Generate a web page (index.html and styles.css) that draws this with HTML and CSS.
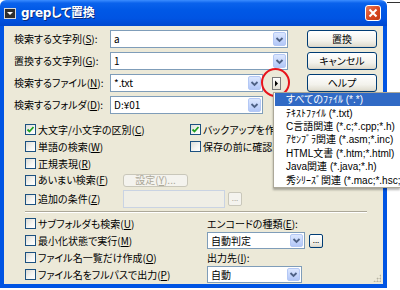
FILE: index.html
```html
<!doctype html>
<html>
<head>
<meta charset="UTF-8">
<title>grepして置換</title>
<link rel="stylesheet" href="styles.css">
</head>
<body>
<div class="desk-line"></div>
<div class="window">
	<div class="titlebar">
		<span class="sysicon"></span>
		<span class="title">grepして置換</span>
		<span class="close"><svg width="10" height="10" viewBox="0 0 10 10"><path d="M1.5 1.5 L8.5 8.5 M8.5 1.5 L1.5 8.5" stroke="#fff" stroke-width="2"/></svg></span>
	</div>
	<div class="frame">
		<div class="top">
			<div class="fields">
				<div class="field-row">
					<span class="lbl">検索する文字列(<u>S</u>):</span>
					<div class="combo wide"><span class="val">a</span><span class="drop"><svg width="9" height="7" viewBox="0 0 9 7"><path d="M1.5 2 L4.5 5 L7.5 2" fill="none" stroke="#4D6185" stroke-width="1.8"/></svg></span></div>
				</div>
				<div class="field-row">
					<span class="lbl">置換する文字列(<u>G</u>):</span>
					<div class="combo wide"><span class="val">1</span><span class="drop"><svg width="9" height="7" viewBox="0 0 9 7"><path d="M1.5 2 L4.5 5 L7.5 2" fill="none" stroke="#4D6185" stroke-width="1.8"/></svg></span></div>
				</div>
				<div class="field-row">
					<span class="lbl">検索するファイル(<u>N</u>):</span>
					<div class="combo narrow"><span class="val">*.txt</span><span class="drop"><svg width="9" height="7" viewBox="0 0 9 7"><path d="M1.5 2 L4.5 5 L7.5 2" fill="none" stroke="#4D6185" stroke-width="1.8"/></svg></span></div>
					<span class="pick"><svg width="5" height="7" viewBox="0 0 5 7"><path d="M1 0.5 L4 3.5 L1 6.5 Z" fill="#000"/></svg></span>
				</div>
				<div class="field-row">
					<span class="lbl">検索するフォルダ(<u>D</u>):</span>
					<div class="combo narrow"><span class="val">D:¥01</span><span class="drop"><svg width="9" height="7" viewBox="0 0 9 7"><path d="M1.5 2 L4.5 5 L7.5 2" fill="none" stroke="#4D6185" stroke-width="1.8"/></svg></span></div>
				</div>
			</div>
			<div class="buttons">
				<div class="btn">置換</div>
				<div class="btn">キャンセル</div>
				<div class="btn">ヘルプ</div>
			</div>
		</div>

		<div class="options">
			<div class="opt-row">
				<div class="col-left"><span class="box checked"><svg width="9" height="9" viewBox="0 0 9 9"><path d="M1.5 4.5 L3.5 6.5 L7.5 2" fill="none" stroke="#21A121" stroke-width="1.8"/></svg></span>大文字/小文字の区別(<u>C</u>)</div>
				<div class="col-right"><span class="box checked"><svg width="9" height="9" viewBox="0 0 9 9"><path d="M1.5 4.5 L3.5 6.5 L7.5 2" fill="none" stroke="#21A121" stroke-width="1.8"/></svg></span>バックアップを作成(<u>B</u>)</div>
			</div>
			<div class="opt-row">
				<div class="col-left"><span class="box"></span>単語の検索(<u>W</u>)</div>
				<div class="col-right"><span class="box"></span>保存の前に確認(<u>K</u>)</div>
			</div>
			<div class="opt-row">
				<div class="col-left"><span class="box"></span>正規表現(<u>R</u>)</div>
			</div>
			<div class="opt-row short">
				<div class="col-cond"><span class="box"></span>あいまい検索(<u>F</u>)</div>
				<div class="btn small disabled">設定(<u>Y</u>)...</div>
			</div>
			<div class="opt-row tall">
				<div class="col-cond"><span class="box"></span>追加の条件(<u>Z</u>)</div>
				<div class="edit disabled"></div>
				<div class="btn dots disabled">...</div>
			</div>
		</div>

		<div class="sep"></div>

		<div class="bottom">
			<div class="bottom-left">
				<div class="opt-row"><span class="box"></span>サブフォルダも検索(<u>U</u>)</div>
				<div class="opt-row"><span class="box"></span>最小化状態で実行(<u>M</u>)</div>
				<div class="opt-row"><span class="box"></span>ファイル名一覧だけ作成(<u>O</u>)</div>
				<div class="opt-row"><span class="box"></span>ファイル名をフルパスで出力(<u>P</u>)</div>
			</div>
			<div class="bottom-right">
				<div class="sub-lbl">エンコードの種類(<u>E</u>):</div>
				<div class="enc-row">
					<div class="combo enc"><span class="val">自動判定</span><span class="drop"><svg width="9" height="7" viewBox="0 0 9 7"><path d="M1.5 2 L4.5 5 L7.5 2" fill="none" stroke="#4D6185" stroke-width="1.8"/></svg></span></div>
					<div class="btn dots">...</div>
				</div>
				<div class="sub-lbl">出力先(<u>I</u>):</div>
				<div class="combo out"><span class="val">自動</span><span class="drop"><svg width="9" height="7" viewBox="0 0 9 7"><path d="M1.5 2 L4.5 5 L7.5 2" fill="none" stroke="#4D6185" stroke-width="1.8"/></svg></span></div>
			</div>
		</div>
		<div class="grip"></div>
	</div>
</div>

<div class="circle"></div>

<ul class="menu">
	<li class="sel">すべてのﾌｧｲﾙ (*.*)</li>
	<li>ﾃｷｽﾄﾌｧｲﾙ (*.txt)</li>
	<li>C言語関連 (*.c;*.cpp;*.h)</li>
	<li>ｱｾﾝﾌﾞﾗ関連 (*.asm;*.inc)</li>
	<li>HTML文書 (*.htm;*.html)</li>
	<li>Java関連 (*.java;*.h)</li>
	<li>秀ｼﾘｰｽﾞ関連 (*.mac;*.hsc;*.hsp)</li>
</ul>
</body>
</html>
```

FILE: styles.css
```css
* {
	box-sizing: border-box;
}

body {
	margin: 0;
	background: #fff;
	width: 400px;
	height: 290px;
	overflow: hidden;
	position: relative;
	font-family: "Noto Sans CJK JP", "Liberation Sans", sans-serif;
	font-size: 10px;
	font-feature-settings: "palt";
	color: #000;
	line-height: 1;
}

u {
	text-decoration: underline;
	text-underline-offset: 1px;
}

.desk-line {
	position: absolute;
	left: 387px;
	top: 2px;
	width: 13px;
	height: 1px;
	background: #333;
}

.window {
	width: 387px;
}

/* title bar */
.titlebar {
	height: 26px;
	display: flex;
	align-items: center;
	padding: 0 6px 0 4px;
	border-radius: 6px 6px 0 0;
	background: linear-gradient(#3C8DFF 0, #0A62EC 12%, #0058E6 40%, #0054E3 70%, #0048CF 100%);
}

.sysicon {
	width: 12px;
	height: 11px;
	margin-top: 1px;
	background: #2E2E2E;
	border: 1px solid #D8D8D8;
	position: relative;
}

.sysicon::after {
	content: "";
	position: absolute;
	left: 2px;
	top: 3px;
	border-left: 3px solid transparent;
	border-right: 3px solid transparent;
	border-top: 3px solid #fff;
}

.title {
	margin-left: 5px;
	color: #fff;
	font-weight: bold;
	font-size: 12px;
	font-family: "DejaVu Sans", "Noto Sans CJK JP", sans-serif;
	letter-spacing: -0.3px;
	text-shadow: 1px 1px 0 #0A2A7A;
}

.close {
	margin-left: auto;
	width: 16px;
	height: 16px;
	border: 1px solid #fff;
	border-radius: 3px;
	background: linear-gradient(135deg, #E97A5A, #D8461F 55%, #C23A14);
	display: flex;
	align-items: center;
	justify-content: center;
}

/* body of dialog */
.frame {
	position: relative;
	background: #ECE9D8;
	border: 4px solid #0054E3;
	border-top: 0;
	padding: 4px 0 1px 10px;
}

.top {
	display: flex;
}

.fields {
	width: 274px;
}

.field-row {
	display: flex;
	align-items: center;
	height: 18px;
	margin-bottom: 4px;
}

.field-row:last-child {
	margin-bottom: 0;
}

.lbl {
	width: 96px;
	white-space: nowrap;
}

.combo {
	height: 18px;
	background: #fff;
	border: 1px solid #7F9DB9;
	display: flex;
	align-items: center;
	padding: 1px;
}

.combo .val {
	flex: 1;
	padding-left: 2px;
}

.combo.wide {
	width: 178px;
}

.combo.narrow {
	width: 153px;
}

.drop {
	width: 13px;
	height: 14px;
	border-radius: 2px;
	border: 1px solid #B4C8F5;
	background: linear-gradient(#DCE7FE, #C3D4FB 60%, #B2C7F7);
	display: flex;
	align-items: center;
	justify-content: center;
}

.pick {
	width: 9px;
	height: 13px;
	margin-left: 9px;
	border: 1px solid #7A7A7A;
	background: linear-gradient(#fff, #E2DFD2);
	display: flex;
	align-items: center;
	justify-content: center;
}

.buttons {
	margin-left: 19px;
	width: 70px;
	display: flex;
	flex-direction: column;
	gap: 4px;
}

.btn {
	height: 18px;
	border: 1px solid #003C74;
	border-radius: 3px;
	background: linear-gradient(#FFFFFF, #F3F2EC 60%, #E3E0D4 90%, #D6D0C5);
	display: flex;
	align-items: center;
	justify-content: center;
	white-space: nowrap;
}

.btn.disabled {
	border-color: #C9C7BA;
	background: #F4F3EE;
	color: #ACA899;
}

.btn.small {
	width: 65px;
	height: 13px;
}

.btn.dots {
	width: 14px;
	height: 14px;
	border-radius: 2px;
	font-size: 8px;
	align-items: flex-end;
	padding-bottom: 3px;
}

/* check options */
.options {
	margin-top: 7px;
	padding-left: 11px;
}

.opt-row {
	display: flex;
	align-items: center;
	height: 17px;
	white-space: nowrap;
}

.opt-row.short {
	height: 16px;
}

.opt-row.tall {
	height: 18px;
	margin-top: 2px;
}

.col-left {
	width: 165px;
	display: flex;
	align-items: center;
}

.col-right {
	display: flex;
	align-items: center;
}

.col-cond {
	width: 98px;
	display: flex;
	align-items: center;
}

.box {
	width: 11px;
	height: 11px;
	margin-right: 2px;
	border: 1px solid #1C5180;
	background: linear-gradient(135deg, #DCDCD7, #F6F6F3 60%, #fff);
	display: flex;
	align-items: center;
	justify-content: center;
	flex: none;
}

.edit {
	width: 102px;
	height: 18px;
	border: 1px solid #C9D3E3;
	background: #EFEEE6;
	margin-right: 3px;
}

.sep {
	width: 342px;
	margin: 3px 0 0 11px;
	border-top: 1px solid #ACA899;
	border-bottom: 1px solid #fff;
}

/* lower part */
.bottom {
	display: flex;
	padding-left: 11px;
	margin-top: 2px;
}

.bottom-left {
	width: 182px;
}

.sub-lbl {
	height: 17px;
	display: flex;
	align-items: center;
}

.enc-row {
	display: flex;
	align-items: center;
	gap: 4px;
}

.combo.enc {
	width: 98px;
	height: 17px;
}

.combo.out {
	width: 95px;
	height: 17px;
}

.combo.enc .drop,
.combo.out .drop {
	height: 13px;
}

.grip {
	position: absolute;
	right: 2px;
	bottom: 2px;
	width: 8px;
	height: 8px;
	background: radial-gradient(circle, #B5B29F 0.8px, transparent 1.2px) 0 0 / 3px 3px;
	clip-path: polygon(100% 0, 100% 100%, 0 100%);
}

/* overlays */
.circle {
	position: absolute;
	left: 261px;
	top: 68px;
	width: 29px;
	height: 29px;
	border: 2.5px solid #E8141C;
	border-radius: 50%;
}

.menu {
	position: absolute;
	left: 273px;
	top: 92px;
	width: 127px;
	margin: 0;
	padding: 0 0 0 1px;
	list-style: none;
	background: #fff;
	border: 1px solid #ACA899;
	border-right: 0;
	overflow: hidden;
	box-shadow: 0 2px 2px rgba(0, 0, 0, 0.3);
	font-family: "Liberation Sans", "Noto Sans CJK JP", sans-serif;
}

.menu li {
	height: 13.4px;
	padding: 1.2px 0 0 11px;
	line-height: 11px;
	white-space: nowrap;
}

.menu li.sel {
	background: #316AC5;
	color: #fff;
}
```
